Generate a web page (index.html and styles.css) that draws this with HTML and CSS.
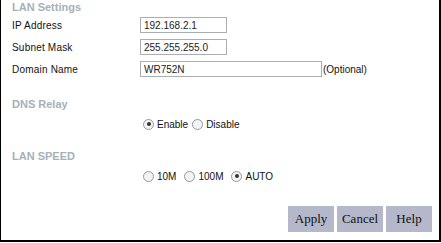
FILE: index.html
```html
<!DOCTYPE html>
<html lang="en">
<head>
  <meta charset="UTF-8">
  <title>LAN Settings</title>
  <link rel="stylesheet" href="styles.css">
</head>
<body>
  <div class="panel">
    <h2 class="section">LAN Settings</h2>
    <div class="row">
      <label class="label">IP Address</label>
      <input class="field" type="text" value="192.168.2.1">
    </div>
    <div class="row">
      <label class="label">Subnet Mask</label>
      <input class="field" type="text" value="255.255.255.0">
    </div>
    <div class="row">
      <label class="label">Domain Name</label>
      <div class="inline">
        <input class="field wide" type="text" value="WR752N">
        <span class="hint">(Optional)</span>
      </div>
    </div>

    <h2 class="section dns">DNS Relay</h2>
    <div class="options">
      <label class="opt"><input type="radio" name="dns" checked>Enable</label>
      <label class="opt"><input type="radio" name="dns">Disable</label>
    </div>

    <h2 class="section speed">LAN SPEED</h2>
    <div class="options spaced">
      <label class="opt"><input type="radio" name="speed">10M</label>
      <label class="opt"><input type="radio" name="speed">100M</label>
      <label class="opt"><input type="radio" name="speed" checked>AUTO</label>
    </div>

    <div class="actions">
      <button class="btn">Apply</button>
      <button class="btn">Cancel</button>
      <button class="btn">Help</button>
    </div>
  </div>
</body>
</html>
```

FILE: styles.css
```css
body {
  margin: 0;
  background: #fff;
  font-family: 'Liberation Sans', Arial, sans-serif;
  font-size: 10px;
  color: #111;
}
.panel {
  width: 427px;
  height: 239px;
  border-left: 1px solid #000;
  border-right: 2px solid #000;
  border-bottom: 2px solid #000;
  padding: 1px 0 0 11px;
}
.section {
  margin: 0;
  font-size: 11px;
  line-height: 13px;
  height: 13px;
  font-weight: bold;
  color: #a5b1b8;
}
.section.dns {
  margin-top: 18px;
}
.section.speed {
  margin-top: 16px;
}
.row {
  display: grid;
  grid-template-columns: 128px auto;
  align-items: center;
  height: 22px;
}
.label {
  letter-spacing: 0.2px;
}
.inline {
  display: flex;
  align-items: center;
}
.field {
  box-sizing: border-box;
  width: 87px;
  height: 16px;
  margin: 0;
  padding: 0 3px;
  border: 1px solid #a8aeb3;
  font-family: 'Liberation Sans', Arial, sans-serif;
  font-size: 10px;
  color: #222;
  outline: none;
}
.field.wide {
  width: 182px;
}
.hint {
  margin-left: 1px;
}
.options {
  display: flex;
  align-items: center;
  height: 20px;
  margin-top: 3px;
  padding-left: 131px;
  gap: 4px;
}
.options.spaced {
  gap: 8px;
}
.opt {
  display: flex;
  align-items: center;
  gap: 3px;
}
.opt input {
  appearance: none;
  box-sizing: border-box;
  width: 11px;
  height: 11px;
  margin: 0;
  border: 1px solid #8e9aa6;
  border-radius: 50%;
  background: #f4f4f4;
  display: grid;
  place-content: center;
}
.opt input:checked::before {
  content: "";
  width: 4px;
  height: 4px;
  border-radius: 50%;
  background: #333;
}
.actions {
  display: flex;
  justify-content: flex-end;
  gap: 3px;
  margin-top: 20px;
  padding-right: 7px;
}
.btn {
  width: 46px;
  height: 26px;
  margin: 0;
  padding: 0;
  border: none;
  background: #b5b8cb;
  font-family: 'Liberation Serif', 'Times New Roman', serif;
  font-size: 13px;
  color: #111;
}
```
